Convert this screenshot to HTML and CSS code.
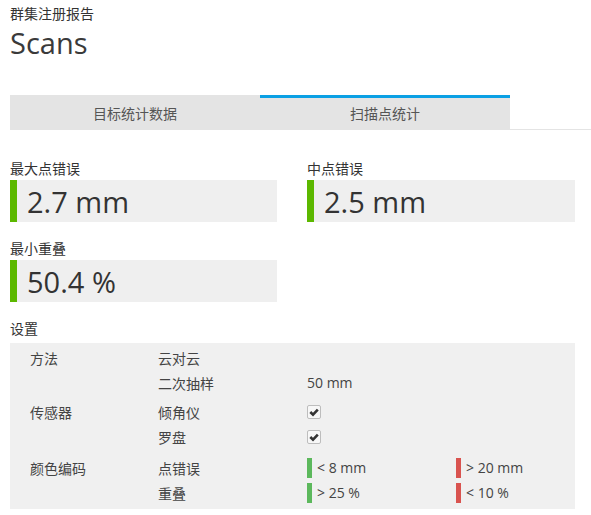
FILE: index.html
```html
<!DOCTYPE html>
<html lang="zh">
<head>
    <meta charset="UTF-8">
    <meta name="viewport" content="width=device-width, initial-scale=1.0">
    <title>Scans</title>
    <link rel="stylesheet" href="styles.css">
</head>
<body>
    <div class="page">
        <div class="report-title">群集注册报告</div>
        <h1 class="page-title">Scans</h1>

        <div class="tabs">
            <div class="tab">目标统计数据</div>
            <div class="tab active">扫描点统计</div>
        </div>

        <div class="stats">
            <div class="stat">
                <div class="stat-label">最大点错误</div>
                <div class="stat-box"><span class="stat-value">2.7 mm</span></div>
            </div>
            <div class="stat">
                <div class="stat-label">中点错误</div>
                <div class="stat-box"><span class="stat-value">2.5 mm</span></div>
            </div>
            <div class="stat">
                <div class="stat-label">最小重叠</div>
                <div class="stat-box"><span class="stat-value">50.4 %</span></div>
            </div>
        </div>

        <div class="section-label">设置</div>
        <div class="settings">
            <div class="group">
                <div class="cell key">方法</div>
                <div class="cell">云对云</div>
                <div class="cell"></div>
                <div class="cell"></div>
                <div class="cell"></div>
                <div class="cell">二次抽样</div>
                <div class="cell">50 mm</div>
                <div class="cell"></div>
            </div>
            <div class="group">
                <div class="cell key">传感器</div>
                <div class="cell">倾角仪</div>
                <div class="cell"><span class="check"><svg viewBox="0 0 10 10" width="10" height="10"><path d="M1.3 5 L4 7.6 L8.8 2.6" fill="none" stroke="#333" stroke-width="2.6"/></svg></span></div>
                <div class="cell"></div>
                <div class="cell"></div>
                <div class="cell">罗盘</div>
                <div class="cell"><span class="check"><svg viewBox="0 0 10 10" width="10" height="10"><path d="M1.3 5 L4 7.6 L8.8 2.6" fill="none" stroke="#333" stroke-width="2.6"/></svg></span></div>
                <div class="cell"></div>
            </div>
            <div class="group">
                <div class="cell key">颜色编码</div>
                <div class="cell">点错误</div>
                <div class="cell"><span class="swatch good"></span>&lt; 8 mm</div>
                <div class="cell"><span class="swatch bad"></span>&gt; 20 mm</div>
                <div class="cell"></div>
                <div class="cell">重叠</div>
                <div class="cell"><span class="swatch good"></span>&gt; 25 %</div>
                <div class="cell"><span class="swatch bad"></span>&lt; 10 %</div>
            </div>
        </div>
    </div>
</body>
</html>
```

FILE: styles.css
```css
* {
    margin: 0;
    padding: 0;
    box-sizing: border-box;
}

body {
    font-family: 'Open Sans', 'Noto Sans CJK SC', sans-serif;
    color: #333;
    background: #fff;
}

.page {
    padding: 4px 0 0 10px;
}

.report-title {
    font-size: 14px;
    line-height: 20px;
}

.page-title {
    font-size: 29px;
    font-weight: normal;
    line-height: 40px;
    margin-top: -1px;
    color: #3a3a3a;
}

.tabs {
    display: flex;
    margin-top: 32px;
    border-bottom: 1px solid #e4e4e4;
}

.tab {
    width: 250px;
    height: 35px;
    margin-bottom: -1px;
    background: #e4e4e4;
    color: #555;
    font-size: 14px;
    display: flex;
    align-items: center;
    justify-content: center;
}

.tab.active {
    box-shadow: inset 0 3px 0 #0aa0e4;
}

.stats {
    display: grid;
    grid-template-columns: 267px 268px;
    column-gap: 30px;
    row-gap: 17px;
    margin-top: 29px;
}

.stat-label {
    font-size: 14px;
    line-height: 20px;
    margin-bottom: 1px;
}

.stat-box {
    height: 42px;
    background: #efefef;
    border-left: 7px solid #5cb800;
    padding-left: 10px;
    display: flex;
    align-items: center;
}

.stat-value {
    font-size: 29px;
    color: #333;
}

.section-label {
    font-size: 14px;
    line-height: 20px;
    margin-top: 17px;
}

.settings {
    width: 565px;
    margin-top: 4px;
    background: #f0f0f0;
    padding: 2px 20px 4px;
    font-size: 14px;
}

.group {
    display: grid;
    grid-template-columns: 128px 149px 149px 1fr;
    grid-auto-rows: 25px;
}

.group + .group {
    margin-top: 4px;
}

.group:last-child {
    margin-top: 6px;
}

.cell {
    display: flex;
    align-items: center;
    color: #444;
}

.check {
    width: 14px;
    height: 14px;
    border: 1px solid #bdbdbd;
    border-radius: 2px;
    background: #f7f7f7;
    display: flex;
    align-items: center;
    justify-content: center;
}

.swatch {
    width: 5px;
    height: 20px;
    margin-right: 5px;
}

.swatch.good {
    background: #5cb85c;
}

.swatch.bad {
    background: #d9534f;
}
```
